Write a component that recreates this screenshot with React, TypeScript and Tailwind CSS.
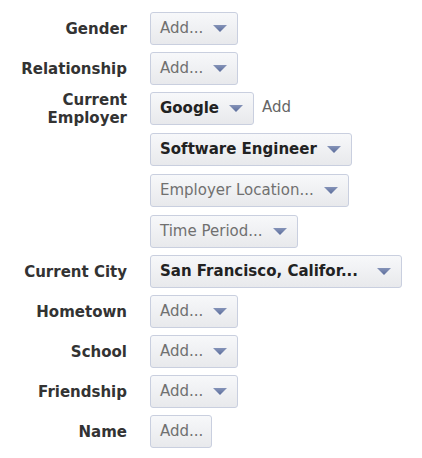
import React from "react";

const Arrow = () => (
  <svg width="14" height="7" viewBox="0 0 14 7" className="shrink-0">
    <defs>
      <linearGradient id="ag" x1="0" y1="0" x2="0" y2="1">
        <stop offset="0" stopColor="#8593b8" />
        <stop offset="1" stopColor="#5b6d9c" />
      </linearGradient>
    </defs>
    <polygon points="0,0 14,0 7,7" fill="url(#ag)" />
  </svg>
);

type BtnProps = {
  label: string;
  bold?: boolean;
  arrow?: boolean;
  wide?: boolean;
};

const Btn = ({ label, bold, arrow = true, wide }: BtnProps) => (
  <div
    className={`flex h-[33px] items-center rounded-[3px] border border-[#c9cfdf] bg-gradient-to-b from-[#f7f8fa] to-[#e8e9ec] pl-[9px] ${
      arrow ? "pr-[10px]" : "pr-[8px]"
    } ${wide ? "w-[252px] justify-between" : "w-fit"}`}
  >
    <span
      className={`whitespace-nowrap text-[15px] leading-none ${
        bold ? "font-bold text-[#222]" : "text-[#707070]"
      }`}
    >
      {label}
    </span>
    {arrow && <span className="ml-[10px] flex items-center">{<Arrow />}</span>}
  </div>
);

const Label = ({ children }: { children: React.ReactNode }) => (
  <div className="flex items-center justify-end text-right text-[15px] font-bold leading-[18px] text-[#333]">
    {children}
  </div>
);

export default function App() {
  return (
    <div
      className="min-h-[458px] w-[422px] bg-white pt-[12px]"
      style={{ fontFamily: '"DejaVu Sans", Verdana, sans-serif' }}
    >
      <div className="grid grid-cols-[127px_auto] gap-x-[23px] gap-y-[7px]">
        <Label>Gender</Label>
        <Btn label="Add..." />

        <Label>Relationship</Label>
        <Btn label="Add..." />

        <div className="flex h-[33px] items-center justify-end text-right text-[15px] font-bold leading-[18px] text-[#333]">
          <span>
            Current
            <br />
            Employer
          </span>
        </div>
        <div className="flex flex-col gap-[8px]">
          <div className="flex items-start gap-[8px]">
            <Btn label="Google" bold />
            <span className="pt-[6px] text-[15px] leading-[18px] text-[#666]">Add</span>
          </div>
          <Btn label="Software Engineer" bold />
          <Btn label="Employer Location..." />
          <Btn label="Time Period..." />
        </div>

        <Label>Current City</Label>
        <Btn label="San Francisco, Califor..." bold wide />

        <Label>Hometown</Label>
        <Btn label="Add..." />

        <Label>School</Label>
        <Btn label="Add..." />

        <Label>Friendship</Label>
        <Btn label="Add..." />

        <Label>Name</Label>
        <Btn label="Add..." arrow={false} />
      </div>
    </div>
  );
}
